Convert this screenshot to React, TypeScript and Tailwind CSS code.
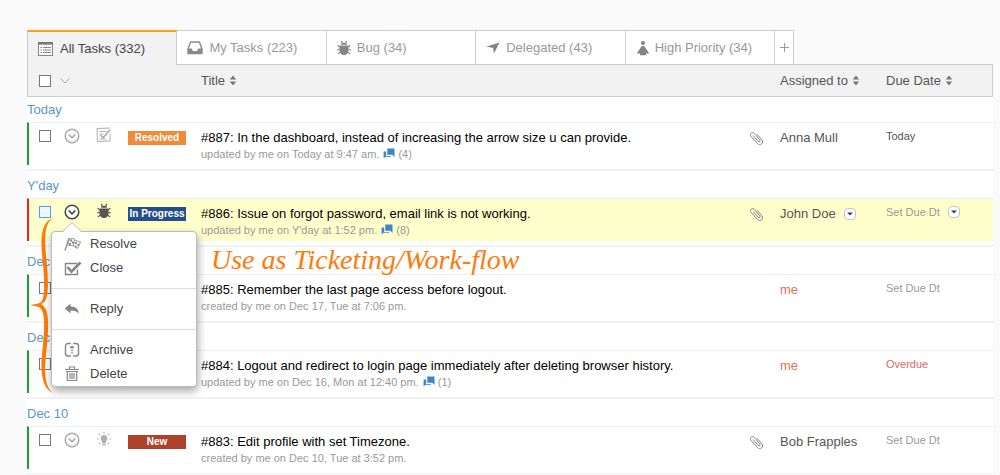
import React, { Fragment } from "react";

type IconProps = { className?: string };

function ListIcon() {
  return (
    <svg width="16" height="14" viewBox="0 0 16 14" className="shrink-0">
      <rect x="0.5" y="0.5" width="14" height="13" fill="#fafafa" stroke="#888" />
      <rect x="0" y="0" width="15" height="2.600" fill="#777" />
      <path d="M2.500 5.500H4M2.500 8H4M2.500 10.500H4M5 5.500h8M5 8h8M5 10.500h8" stroke="#8a8a8a" />
    </svg>
  );
}

function InboxIcon() {
  return (
    <svg width="16" height="14" viewBox="0 0 16 14" className="shrink-0">
      <path
        d="M3.600 1h8.800L15 8V12.600H1V8Z"
        fill="#fff"
        stroke="#8a8a8a"
        strokeWidth="1.400"
        strokeLinejoin="round"
      />
      <path d="M1 7.600h3.800l1 2.400h4.400l1-2.400H15V13H1Z" fill="#8a8a8a" />
    </svg>
  );
}

function BugIcon({ className }: IconProps) {
  return (
    <svg width="14" height="16" viewBox="0 0 14 16" className={className} fill="none" stroke="currentColor">
      <path d="M4 4.800C4 3.500 4.800 2.800 7 2.800s3 .7 3 2Z" fill="currentColor" stroke="none" />
      <path d="M5.300 3.300 4.300 1M8.700 3.300 9.700 1" strokeWidth="1.300" />
      <path d="M2.800 5.400h8.400c1.200 5-.4 9.600-4.200 9.600S1.600 10.400 2.800 5.400Z" fill="currentColor" stroke="none" />
      <path d="M3 7 .7 5.200M11 7l2.300-1.800M3 9.800H0M11 9.800h3M3.300 12 .8 14.200M10.700 12l2.500 2.200" strokeWidth="1.100" />
    </svg>
  );
}

function ArrowIcon() {
  return (
    <svg width="14" height="12" viewBox="0 0 14 12" className="shrink-0">
      <path d="M13.500.5 8 11.500 7 6 .3 4.600Z" fill="#858585" />
    </svg>
  );
}

function PriorityIcon() {
  return (
    <svg width="13" height="16" viewBox="0 0 13 16" className="shrink-0" fill="#858585">
      <circle cx="7" cy="3" r="2" />
      <path d="M5.800 6h2.400L12.800 12.800v.6H10v1.800H4v-1.800H1.200v-.6Z" />
    </svg>
  );
}

function CheckNoteIcon({ className }: IconProps) {
  return (
    <svg width="16" height="16" viewBox="0 0 16 16" className={className} fill="none" stroke="currentColor">
      <path d="M14 7v7L1.500 14.500 1 1.500 14 1" />
      <path d="M3.500 4.500h7M3.500 7h4M3.500 12h7" />
      <path d="M4.500 8 7 10.800l7-8" strokeWidth="1.800" />
    </svg>
  );
}

function BulbIcon({ className }: IconProps) {
  return (
    <svg width="16" height="16" viewBox="0 0 16 16" className={className} fill="none" stroke="currentColor">
      <path d="M8 4a3.400 3.400 0 0 0-2 6.200V12.500h4V10.200A3.400 3.400 0 0 0 8 4Z" fill="currentColor" stroke="none" />
      <path d="M6.300 13.800h3.400M8 .8v1.700M2.900 2.900l1.200 1.200M13.100 2.900l-1.200 1.200M.8 8h2M13.200 8h2M2.900 13.100l1.200-1.200M13.100 13.100l-1.200-1.200" strokeWidth="1.200" />
    </svg>
  );
}

function CircleDown() {
  return (
    <svg width="16" height="16" viewBox="0 0 16 16" fill="#fff" stroke="currentColor" strokeWidth="1.500">
      <circle cx="8" cy="8" r="6.800" />
      <path d="M4.600 6.500 8 9.800l3.400-3.300" fill="none" strokeWidth="1.700" />
    </svg>
  );
}

function Clip() {
  return (
    <svg width="15" height="15" viewBox="0 0 15 15" fill="none" stroke="#858585" role="img" aria-label="Attachment">
      <path d="M4.200 4.600 9 10.300c1.500 1.400 2.900 0 1.700-1.500L5.300 2.400C3.200.3.100 3 2 5.300l6.500 7.200c2.700 2.800 6.800-.6 4.400-3.600L8 3.200" />
    </svg>
  );
}

function ChatIcon() {
  return (
    <svg width="12" height="11" viewBox="0 0 12 11" fill="#3d85c6" className="inline-block align-[-1px]">
      <path d="M4.300.5h7.200V9L9.300 6.800h-5Z" />
      <path d="M3.200 3.500H.6v7L2.600 8.800H8V7.900H3.200Z" />
    </svg>
  );
}

function SortIcon() {
  return (
    <svg width="8" height="11" viewBox="0 0 8 11" fill="#777" className="ml-1 inline-block align-[-1px]">
      <path d="M4 .5 7.200 4.500H.8ZM4 10.500.8 6.500h6.400Z" />
    </svg>
  );
}

function FlagIcon() {
  return (
    <svg width="18" height="14" viewBox="0 0 18 14" fill="none" stroke="#999">
      <path d="M5 1 1 13.500" strokeWidth="1.500" />
      <path d="M5.500 1.500c2 1.200 3-.8 5 .5l-1.200 7C7.500 7.800 5.500 9.200 3.500 8Z" />
      <path d="m10.500 3 6 2-3 6.500-4-2.500" />
      <path d="M6 2.500h2v2H6zM8 4.500h2v2H8zM5 6h2v2H5zM11 5h2v2h-2zM13.500 7H15v2h-1.500zM11 8.500h1.500v2H11z" fill="#888" stroke="none" />
    </svg>
  );
}

function CloseIcon() {
  return (
    <svg width="18" height="15" viewBox="0 0 18 15" fill="none" stroke="#858585">
      <path d="M13.500 8.500v5H1.500v-11h12" strokeWidth="1.400" />
      <path d="m3.500 6 4 4.500 9-9" strokeWidth="2.600" />
    </svg>
  );
}

function ReplyIcon() {
  return (
    <svg width="16" height="12" viewBox="0 0 16 12" fill="#858585">
      <path d="M6.500.5v3c5 0 8.300 2.400 8.300 7.500-1.600-2.500-4-3.400-8.300-3.400v3L.8 5.500Z" />
    </svg>
  );
}

function ArchiveIcon() {
  return (
    <svg width="16" height="16" viewBox="0 0 16 16" fill="none" stroke="#858585" strokeWidth="1.400">
      <path d="M6.800 1.500H4A2.500 2.500 0 0 0 1.500 4v7.500A2.500 2.500 0 0 0 4 14h2.800M9.200 1.500H12A2.500 2.500 0 0 1 14.500 4v7.500A2.500 2.500 0 0 1 12 14H9.200" />
      <path d="M8 5v7" strokeDasharray="1.500 1" />
      <path d="M6 6 8 4l2 2" strokeWidth="1.200" />
    </svg>
  );
}

function TrashIcon() {
  return (
    <svg width="16" height="16" viewBox="0 0 16 16" fill="none" stroke="#858585" strokeWidth="1.200">
      <path d="M1 3.500h14M5.500 3V1h5v2M2 5.500h12M3.300 5.500v9h9.400v-9M6 7v6M8 7v6M10 7v6" />
    </svg>
  );
}

function Caret({ label }: { label: string }) {
  return (
    <button
      type="button"
      aria-label={label}
      className="flex h-3 w-3 items-center justify-center rounded-sm border border-[#c4c4cc] bg-white"
    >
      <svg width="6" height="4" viewBox="0 0 6 4" fill="#444">
        <path d="M0 .5h6L3 3.500Z" />
      </svg>
    </button>
  );
}

const tabs = [
  { label: "All Tasks (332)", icon: <ListIcon />, active: true },
  { label: "My Tasks (223)", icon: <InboxIcon /> },
  { label: "Bug (34)", icon: <BugIcon className="shrink-0 text-[#858585]" /> },
  { label: "Delegated (43)", icon: <ArrowIcon /> },
  { label: "High Priority (34)", icon: <PriorityIcon /> },
];

type Task = {
  group: string;
  title: string;
  meta: string;
  comments?: number;
  status?: string;
  statusClass?: string;
  icon?: React.ReactNode;
  clip?: boolean;
  who: string;
  whoClass: string;
  due: string;
  dueClass: string;
  open?: boolean;
};

const tasks: Task[] = [
  {
    group: "Today",
    title: "#887: In the dashboard, instead of increasing the arrow size u can provide.",
    meta: "updated by me on Today at 9:47 am.",
    comments: 4,
    status: "Resolved",
    statusClass: "bg-[#ef8b3a]",
    icon: <CheckNoteIcon className="text-[#b0b0b0]" />,
    clip: true,
    who: "Anna Mull",
    whoClass: "text-[#555]",
    due: "Today",
    dueClass: "text-[#555]",
  },
  {
    group: "Y'day",
    title: "#886: Issue on forgot password, email link is not working.",
    meta: "updated by me on Y'day at 1:52 pm.",
    comments: 8,
    status: "In Progress",
    statusClass: "bg-[#234f86]",
    icon: <BugIcon className="ml-px text-[#555]" />,
    clip: true,
    who: "John Doe",
    whoClass: "text-[#555]",
    due: "Set Due Dt",
    dueClass: "text-[#999]",
    open: true,
  },
  {
    group: "Dec 17",
    title: "#885: Remember the last page access before logout.",
    meta: "created by me on Dec 17, Tue at 7:06 pm.",
    who: "me",
    whoClass: "text-[#e0735a]",
    due: "Set Due Dt",
    dueClass: "text-[#999]",
  },
  {
    group: "Dec 16",
    title: "#884: Logout and redirect to login page immediately after deleting browser history.",
    meta: "updated by me on Dec 16, Mon at 12:40 pm.",
    comments: 1,
    who: "me",
    whoClass: "text-[#e0735a]",
    due: "Overdue",
    dueClass: "text-[#dd6b62]",
  },
  {
    group: "Dec 10",
    title: "#883: Edit profile with set Timezone.",
    meta: "created by me on Dec 10, Tue at 3:52 pm.",
    status: "New",
    statusClass: "bg-[#ad432a]",
    icon: <BulbIcon className="text-[#b0b0b0]" />,
    clip: true,
    who: "Bob Frapples",
    whoClass: "text-[#555]",
    due: "Set Due Dt",
    dueClass: "text-[#999]",
  },
];

const menuGroups = [
  [
    { label: "Resolve", icon: <FlagIcon /> },
    { label: "Close", icon: <CloseIcon /> },
  ],
  [{ label: "Reply", icon: <ReplyIcon /> }],
  [
    { label: "Archive", icon: <ArchiveIcon /> },
    { label: "Delete", icon: <TrashIcon /> },
  ],
];

function ActionMenu() {
  return (
    <div className="absolute -left-[13px] top-[27px] z-20 w-[146px] rounded-sm border border-[#bbb] bg-white shadow-[1px_4px_8px_rgba(0,0,0,0.35)]">
      <svg width="20" height="11" viewBox="0 0 20 11" className="absolute -top-[10px] left-[10px]">
        <path d="M0 10.500 10 .5l10 10" fill="#fff" stroke="#bbb" />
      </svg>
      {menuGroups.map((items, i) => (
        <div key={i} className={i > 0 ? "mt-2 border-t border-[#ddd] pt-2" : ""}>
          {items.map((item) => (
            <button key={item.label} type="button" className="flex h-6 w-full items-center pl-3 text-[13px] text-[#444]">
              <span className="flex w-[26px]">{item.icon}</span>
              {item.label}
            </button>
          ))}
        </div>
      ))}
    </div>
  );
}

function TaskRow({ task }: { task: Task }) {
  const edge = task.open ? "border-l-[#ee2222]" : "border-l-[#18a033]";
  const cell = "border-t border-t-[#eee] p-0 align-top";
  return (
    <tr className={task.open ? "bg-[#ffffcc]" : ""}>
      <td className={`${cell} border-l-2 ${edge}`}>
        <input
          type="checkbox"
          aria-label={`Select ${task.title}`}
          className={`ml-[10px] mt-[7px] block h-3 w-3 appearance-none border ${task.open ? "border-[#4a9ff0] bg-[#eef6ff]" : "border-[#777] bg-white"}`}
        />
      </td>
      <td className={cell}>
        {task.status && (
          <div className="relative ml-1 mt-[5px]">
            <button type="button" aria-label="Task actions" className={`block ${task.open ? "text-[#444]" : "text-[#aaa]"}`}>
              <CircleDown />
            </button>
            {task.open && <ActionMenu />}
          </div>
        )}
      </td>
      <td className={cell}>
        <div className="ml-1 mt-1">{task.icon}</div>
      </td>
      <td className={cell}>
        {task.status && (
          <span className={`mt-2 block h-[14px] w-[58px] text-center text-[10px] leading-[14px] font-bold whitespace-nowrap text-white ${task.statusClass}`}>
            {task.status}
          </span>
        )}
      </td>
      <td className={`${cell} whitespace-nowrap`}>
        <div className="pt-[7px] text-[13px] leading-4 text-black">{task.title}</div>
        <div className="pb-[2px] text-[11px] leading-[17px] text-[#999]">
          {task.meta}
          {task.comments && (
            <span className="ml-1">
              <ChatIcon /> ({task.comments})
            </span>
          )}
        </div>
      </td>
      <td className={cell}>
        <div className="mt-2 ml-px">{task.clip && <Clip />}</div>
      </td>
      <td className={`${cell} whitespace-nowrap`}>
        <div className={`flex items-center gap-2 pt-[7px] text-[13px] leading-4 ${task.whoClass}`}>
          {task.who}
          {task.open && <Caret label="Change assignee" />}
        </div>
      </td>
      <td className={`${cell} whitespace-nowrap`}>
        <div className={`flex items-center gap-2 pt-[5px] text-[11px] leading-4 ${task.dueClass}`}>
          {task.due}
          {task.open && <Caret label="Set due date" />}
        </div>
      </td>
    </tr>
  );
}

export default function App() {
  const head = "h-[33px] border-y border-[#ccc] p-0 text-left text-[13px] font-normal text-[#555]";
  return (
    <main className="min-h-screen overflow-hidden bg-[#fafafa] pt-[30px] pr-[7px] pl-[27px] font-['Liberation_Sans',Arial,sans-serif]">
      <nav className="flex pr-[199px]" aria-label="Task views">
        {tabs.map((tab) => (
          <a
            key={tab.label}
            href="#"
            className={
              tab.active
                ? "relative z-10 -mb-px flex h-[35px] flex-1 items-center gap-[6px] border-x border-t-2 border-x-[#ccc] border-t-[#ff9d1e] bg-[#f2f2f2] pl-[10px] text-[13px] whitespace-nowrap text-[#444]"
                : "flex h-[34px] flex-1 items-center gap-[6px] border-t border-r border-[#ccc] bg-white pl-[10px] text-[13px] whitespace-nowrap text-[#999]"
            }
          >
            {tab.icon}
            {tab.label}
          </a>
        ))}
        <button type="button" aria-label="Add tab" className="flex h-[34px] w-[19px] items-center justify-center border-t border-r border-[#ccc] bg-white">
          <svg width="9" height="9" viewBox="0 0 9 9" stroke="#999">
            <path d="M4.500 0v9M0 4.500h9" />
          </svg>
        </button>
      </nav>
      <div className="relative">
        <table className="w-full table-fixed border-separate border-spacing-0 bg-white">
          <colgroup>
            <col className="w-[33px]" />
            <col className="w-8" />
            <col className="w-9" />
            <col className="w-[73px]" />
            <col />
            <col className="w-8" />
            <col className="w-[106px]" />
            <col className="w-[107px]" />
          </colgroup>
          <thead className="bg-[#f2f2f2]">
            <tr>
              <th className={`${head} border-l`}>
                <input type="checkbox" aria-label="Select all" className="ml-[11px] block h-3 w-3 appearance-none border border-[#777] bg-white" />
              </th>
              <th className={head}>
                <button type="button" aria-label="Bulk actions" className="block">
                  <svg width="10" height="6" viewBox="0 0 10 6" fill="none" stroke="#aaa">
                    <path d="m.5.500 4.500 4.500L9.500.5" />
                  </svg>
                </button>
              </th>
              <th className={head} />
              <th className={head} />
              <th className={head}>
                <button type="button">Title<SortIcon /></button>
              </th>
              <th className={head} />
              <th className={`${head} whitespace-nowrap`}>
                <button type="button">Assigned to<SortIcon /></button>
              </th>
              <th className={`${head} border-r whitespace-nowrap`}>
                <button type="button">Due Date<SortIcon /></button>
              </th>
            </tr>
          </thead>
          <tbody>
            {tasks.map((task, i) => (
              <Fragment key={task.title}>
                <tr>
                  <th colSpan={8} scope="colgroup" className="p-0 text-left text-[13px] font-normal text-[#5a96c8]">
                    <div className={i > 0 ? "mt-1 border-t-2 border-[#f2f2f2] pt-[3px] leading-6" : "leading-[25px]"}>{task.group}</div>
                  </th>
                </tr>
                <TaskRow task={task} />
              </Fragment>
            ))}
            <tr>
              <td colSpan={8} className="p-0">
                <div className="mt-1 border-t border-[#eee] pt-1" />
              </td>
            </tr>
          </tbody>
        </table>
        <svg width="26" height="178" viewBox="0 0 26 178" className="pointer-events-none absolute top-[153px] left-[2px]" fill="#ff7a0a">
          <path d="M24 1C14 4 11 17 13 37c2 20 4 43-1 48-2 2-7 2-11 3 4 1 9 1 11 4 5 6 3 27 1 45-2 20 1 35 11 39-8-6-9-20-7-38 2-20 4-40-1-47-1-2-2-3-4-4 2-1 4-2 5-5 3-8 2-25 0-44C15 18 16 6 24 1Z" />
        </svg>
        <p className="pointer-events-none absolute top-[180px] left-[184px] font-[Gabriola,'Liberation_Serif',serif] text-[28px] leading-8 whitespace-nowrap text-[#ff7a0a] italic">
          Use as Ticketing/Work-flow
        </p>
      </div>
    </main>
  );
}
